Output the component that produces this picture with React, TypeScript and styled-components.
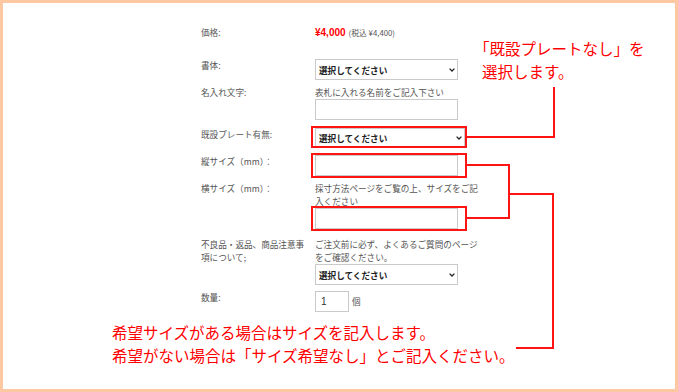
import React from "react";
import styled, { createGlobalStyle } from "styled-components";

const RED = "#ff1414";
const JP = `"Noto Sans CJK JP", "Noto Sans", sans-serif`;

const GlobalStyle = createGlobalStyle`
  html, body { margin: 0; padding: 0; background: #fff; }
  body { font-family: ${JP}; }
`;

const Frame = styled.div`
  position: relative;
  box-sizing: border-box;
  width: 678px;
  height: 392px;
  border: 3px solid #fdc7a2;
  background: #fff;
  overflow: hidden;
`;

const Form = styled.div`
  display: flex;
  flex-direction: column;
  padding: 23px 0 0 198px;
  font-size: 8.6px;
  line-height: 13px;
  color: #555;
`;

const Row = styled.div<{ $mt?: number }>`
  display: flex;
  align-items: flex-start;
  margin-top: ${(p) => p.$mt ?? 6}px;
`;

const Label = styled.div`
  flex: none;
  width: 106px;
  margin-right: 8px;
`;

const Value = styled.div`
  width: 166px;
  display: flex;
  flex-direction: column;
  align-items: flex-start;
`;

const PriceLine = styled.div`
  display: flex;
  align-items: baseline;
`;

const Price = styled.span`
  font: bold 10px "Liberation Sans", sans-serif;
  color: #ff0000;
`;

const Tax = styled.span`
  margin-left: 3px;
  font-size: 7.8px;
  color: #555;
`;

const SelectWrap = styled.div<{ $w?: number; $h?: number }>`
  position: relative;
  width: ${(p) => p.$w ?? 143}px;
  height: ${(p) => p.$h ?? 21}px;
`;

const SelectBox = styled.select`
  appearance: none;
  box-sizing: border-box;
  width: 100%;
  height: 100%;
  margin: 0;
  padding: 0 14px 0 3px;
  border: 1px solid #cacaca;
  border-radius: 0;
  background: #fff;
  font: bold 8.6px ${JP};
  color: #222;
  outline: none;
`;

const Chevron = styled.svg`
  position: absolute;
  right: 3px;
  top: 50%;
  width: 6px;
  height: 4px;
  margin-top: -2px;
  pointer-events: none;
`;

const TextInput = styled.input<{ $w?: number }>`
  box-sizing: border-box;
  width: ${(p) => p.$w ?? 143}px;
  height: 21px;
  margin: 0;
  padding: 0 5px;
  border: 1px solid #cacaca;
  border-radius: 0;
  background: #fff;
  font: 10px "Liberation Sans", sans-serif;
  color: #333;
  outline: none;
`;

const Marked = styled.div<{ $l: number; $r: number; $t: number; $b: number }>`
  position: relative;
  &::after {
    content: "";
    position: absolute;
    top: -${(p) => p.$t}px;
    bottom: -${(p) => p.$b}px;
    left: -${(p) => p.$l}px;
    right: -${(p) => p.$r}px;
    border: 2px solid ${RED};
    pointer-events: none;
  }
`;

const Qty = styled.div`
  display: flex;
  align-items: center;
  gap: 3px;
  color: #555;
`;

const Callout = styled.div<{ $x: number; $y: number; $hang?: number }>`
  position: absolute;
  left: ${(p) => p.$x}px;
  top: ${(p) => p.$y}px;
  color: #ff0000;
  font-family: ${JP};
  font-size: 15.5px;
  line-height: 23px;
  white-space: nowrap;
  text-indent: -${(p) => p.$hang ?? 0}px;
`;

const Leaders = styled.svg`
  position: absolute;
  left: -3px;
  top: -3px;
  width: 678px;
  height: 392px;
  pointer-events: none;
`;

const Select = ({ w, h }: { w?: number; h?: number }) => (
  <SelectWrap $w={w} $h={h}>
    <SelectBox defaultValue="">
      <option value="">選択してください</option>
    </SelectBox>
    <Chevron viewBox="0 0 6 4">
      <path d="M0.6 0.6 L3 3 L5.4 0.6" fill="none" stroke="#222" strokeWidth="1.3" />
    </Chevron>
  </SelectWrap>
);

export default function App() {
  return (
    <>
      <GlobalStyle />
      <Frame>
        <Form>
          <Row $mt={0}>
            <Label>価格:</Label>
            <Value>
              <PriceLine>
                <Price>¥4,000</Price>
                <Tax>(税込 ¥4,400)</Tax>
              </PriceLine>
            </Value>
          </Row>
          <Row $mt={20}>
            <Label>書体:</Label>
            <Value>
              <Select />
            </Value>
          </Row>
          <Row>
            <Label>名入れ文字:</Label>
            <Value>
              <div>表札に入れる名前をご記入下さい</div>
              <TextInput />
            </Value>
          </Row>
          <Row $mt={8}>
            <Label>既設プレート有無:</Label>
            <Value>
              <Marked $l={4} $r={2} $t={2} $b={1}>
                <Select w={150} h={19} />
              </Marked>
            </Value>
          </Row>
          <Row $mt={8}>
            <Label>縦サイズ（mm）：</Label>
            <Value>
              <Marked $l={4} $r={9} $t={2} $b={2}>
                <TextInput />
              </Marked>
            </Value>
          </Row>
          <Row>
            <Label>横サイズ（mm）：</Label>
            <Value>
              <div>採寸方法ページをご覧の上、サイズをご記入ください</div>
              <Marked $l={4} $r={9} $t={2} $b={2}>
                <TextInput />
              </Marked>
            </Value>
          </Row>
          <Row $mt={9}>
            <Label>不良品・返品、商品注意事項について;</Label>
            <Value>
              <div>ご注文前に必ず、よくあるご質問のページをご確認ください。</div>
              <Select />
            </Value>
          </Row>
          <Row>
            <Label>数量:</Label>
            <Value>
              <Qty>
                <TextInput $w={34} defaultValue="1" />
                <span>個</span>
              </Qty>
            </Value>
          </Row>
        </Form>

        <Leaders viewBox="0 0 678 392">
          <g fill="none" stroke={RED} strokeWidth="2">
            <path d="M467 137 H554 V87" />
            <path d="M467 165 H509 V218 H467" />
            <path d="M509 194 H553 V348 H516" />
          </g>
        </Leaders>

        <Callout $x={479} $y={34} $hang={8}>
          「既設プレートなし」を
          <br />
          選択します。
        </Callout>
        <Callout $x={109} $y={318}>
          希望サイズがある場合はサイズを記入します。
          <br />
          希望がない場合は「サイズ希望なし」とご記入ください。
        </Callout>
      </Frame>
    </>
  );
}
